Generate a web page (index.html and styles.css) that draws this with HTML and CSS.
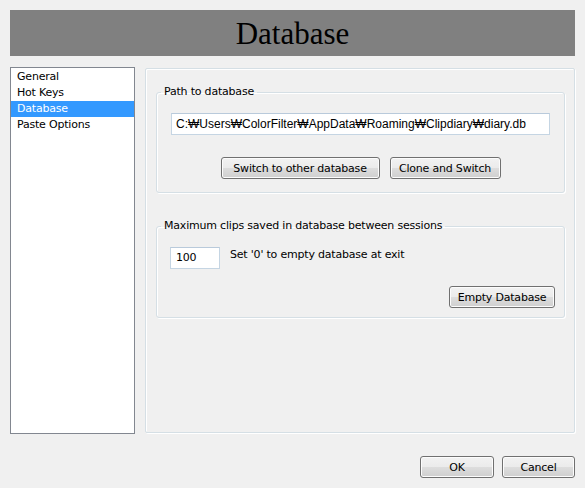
FILE: index.html
```html
<!DOCTYPE html>
<html>
<head>
<meta charset="utf-8">
<link rel="stylesheet" href="styles.css">
</head>
<body>
<div class="window">
  <div class="header">Database</div>
  <div class="main">
    <ul class="list">
      <li>General</li>
      <li>Hot Keys</li>
      <li class="selected">Database</li>
      <li>Paste Options</li>
    </ul>
    <div class="panel">
      <fieldset class="group group-path">
        <legend>Path to database</legend>
        <div class="group-body">
          <div class="textbox path">C:₩Users₩ColorFilter₩AppData₩Roaming₩Clipdiary₩diary.db</div>
          <div class="row center">
            <button class="btn btn-switch">Switch to other database</button>
            <button class="btn btn-clone">Clone and Switch</button>
          </div>
        </div>
      </fieldset>
      <fieldset class="group group-max">
        <legend>Maximum clips saved in database between sessions</legend>
        <div class="group-body">
          <div class="row">
            <div class="textbox count">100</div>
            <span class="hint">Set '0' to empty database at exit</span>
          </div>
          <div class="row end">
            <button class="btn btn-empty">Empty Database</button>
          </div>
        </div>
      </fieldset>
    </div>
  </div>
  <div class="footer">
    <button class="btn btn-ok">OK</button>
    <button class="btn btn-cancel">Cancel</button>
  </div>
</div>
</body>
</html>
```
FILE: styles.css
```css
* { box-sizing: border-box; }
html, body { margin: 0; padding: 0; }
body {
  width: 585px;
  height: 488px;
  background: #f0f0f0;
  font-family: "DejaVu Sans", Tahoma, sans-serif;
  font-size: 11px;
  letter-spacing: -0.2px;
  color: #000;
  overflow: hidden;
}
.window {
  height: 100%;
  padding: 10px 10px 0 10px;
  display: flex;
  flex-direction: column;
}
.header {
  height: 46px;
  background: #808080;
  text-align: center;
  font-family: "Liberation Serif", "Times New Roman", serif;
  font-size: 31px;
  letter-spacing: 0;
  line-height: 48px;
  color: #000;
}
.main {
  display: flex;
  margin-top: 11px;
  height: 367px;
}
.list {
  list-style: none;
  margin: 0;
  padding: 1px 0 0 0;
  width: 125px;
  height: 367px;
  background: #fff;
  border: 1px solid #828790;
}
.list li {
  height: 16px;
  line-height: 16px;
  padding-left: 6px;
  white-space: nowrap;
}
.list li.selected {
  background: #3399ff;
  color: #fff;
}
.panel {
  margin-left: 10px;
  margin-top: 1px;
  width: 430px;
  height: 365px;
  border: 1px solid #d5dfe5;
  box-shadow: inset 1px 1px 0 #fff, 1px 1px 0 #fff;
  border-radius: 2px;
  padding: 16px 9px 0 10px;
}
.group {
  margin: 0;
  padding: 0;
  border: 1px solid #d5dfe5;
  border-radius: 3px;
  box-shadow: inset 1px 1px 0 #fff, 1px 1px 0 #fff;
  min-width: 0;
}
.group legend {
  padding: 0 3px;
  margin-left: 4px;
  line-height: 14px;
  height: 14px;
  white-space: nowrap;
}
.group-path .group-body { padding: 14px 14px 13px 14px; }
.group-max { margin-top: 26px; }
.group-max .group-body { padding: 14px 9px 9px 13px; }
.textbox {
  background: #fff;
  border: 1px solid #c5d5e3;
  border-top-color: #b9cadb;
  height: 22px;
  line-height: 20px;
  padding-left: 4px;
  white-space: nowrap;
  overflow: hidden;
}
.path {
  font-family: "Liberation Sans", Arial, sans-serif;
  font-size: 12px;
  letter-spacing: 0;
}
.count {
  width: 50px;
  padding-left: 5px;
}
.row { display: flex; align-items: center; }
.row.center { justify-content: center; gap: 10px; margin-top: 22px; }
.row.end { justify-content: flex-end; margin-top: 17px; }
.hint { margin-left: 10px; margin-top: -7px; }
.btn {
  font-family: inherit;
  font-size: 11px;
  letter-spacing: -0.2px;
  height: 22px;
  padding: 0;
  border: 1px solid #707070;
  border-radius: 3px;
  color: #000;
  background: linear-gradient(to bottom, #f2f2f2 0%, #ebebeb 50%, #dddddd 51%, #cfcfcf 100%);
  box-shadow: inset 0 0 0 1px #fcfcfc;
}
.btn-switch { width: 159px; }
.btn-clone { width: 111px; }
.btn-empty { width: 106px; }
.footer {
  display: flex;
  justify-content: flex-end;
  gap: 8px;
  margin-top: 22px;
}
.btn-ok { width: 74px; }
.btn-cancel { width: 73px; }
```
